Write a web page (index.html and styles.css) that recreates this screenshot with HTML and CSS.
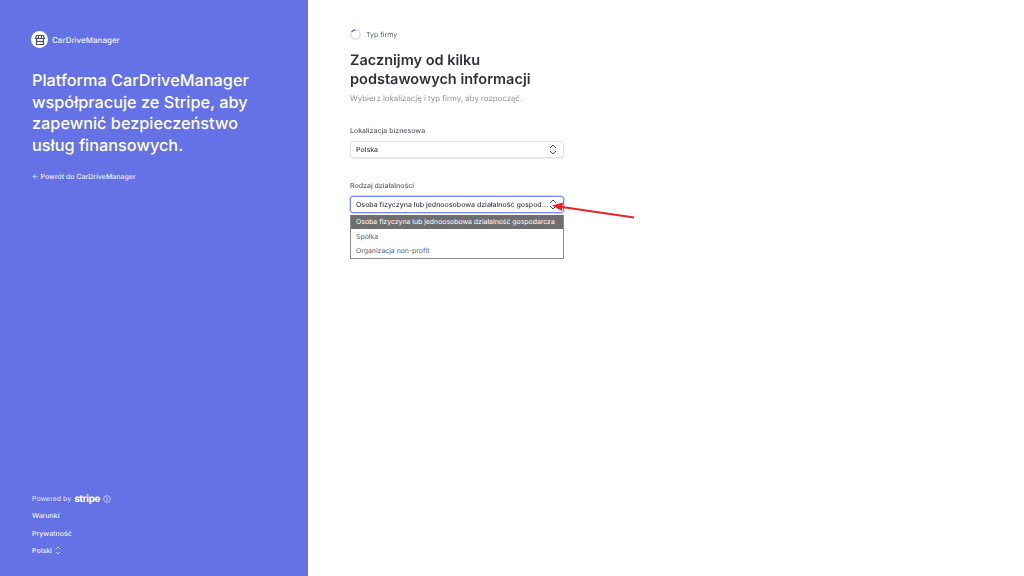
FILE: index.html
```html
<!DOCTYPE html>
<html lang="pl">
<head>
  <meta charset="UTF-8"/>
  <title>CarDriveManager</title>
  <link rel="stylesheet" href="styles.css">
</head>
<body>

<div class="page">
  <div class="side">
    <div class="brand">
      <div class="brand-icon">
        <svg width="12" height="12" viewBox="0 0 12 12" fill="none" stroke="#4a4f63" stroke-width="1.2">
          <path d="M2.5 1.5h7l1 3H1.5z"/>
          <path d="M2.5 5v5.5h7V5"/>
          <path d="M2.5 7.5h7"/>
          <path d="M4.5 1.5v3M7.5 1.5v3"/>
        </svg>
      </div>
      <span>CarDriveManager</span>
    </div>
    <h2 class="side-title">Platforma CarDriveManager współpracuje ze Stripe, aby zapewnić bezpieczeństwo usług finansowych.</h2>
    <div class="back">← Powrót do CarDriveManager</div>

    <div class="side-foot">
      <div class="powered">
        <span>Powered by</span>
        <b class="stripe">stripe</b>
        <svg width="8" height="8" viewBox="0 0 8 8" fill="none" stroke="#d5d9fa" stroke-width="0.8">
          <circle cx="4" cy="4" r="3.4"/>
          <path d="M4 2v4"/>
        </svg>
      </div>
      <div class="foot-link">Warunki</div>
      <div class="foot-link">Prywatność</div>
      <div class="foot-link">Polski
        <svg width="6" height="9" viewBox="0 0 6 9" fill="none" stroke="#e3e6ff" stroke-width="0.8">
          <path d="M1 3l2-2 2 2M1 6l2 2 2-2"/>
        </svg>
      </div>
    </div>
  </div>

  <div class="main">
    <div class="step">
      <svg width="11" height="11" viewBox="0 0 11 11" fill="none" stroke-width="1.3">
        <circle cx="5.5" cy="5.5" r="4.7" stroke="#d6dcf5"/>
        <path d="M1.6 2.9A4.7 4.7 0 0 1 5.5 .8" stroke="#4f6bd8"/>
      </svg>
      <span>Typ firmy</span>
    </div>
    <h1>Zacznijmy od kilku podstawowych informacji</h1>
    <p class="sub">Wybierz lokalizację i typ firmy, aby rozpocząć.</p>

    <div class="field">
      <label>Lokalizacja biznesowa</label>
      <div class="select">
        <span>Polska</span>
        <svg class="chev" width="8" height="11" viewBox="0 0 8 11" fill="none" stroke="#4f5566" stroke-width="1">
          <path d="M1 4l3-3 3 3M1 7l3 3 3-3"/>
        </svg>
      </div>
    </div>

    <div class="field second">
      <label>Rodzaj działalności</label>
      <div class="select focused">
        <span>Osoba fizyczyna lub jednoosobowa działalność gospod...</span>
        <svg class="chev" width="8" height="11" viewBox="0 0 8 11" fill="none" stroke="#4f5566" stroke-width="1">
          <path d="M1 4l3-3 3 3M1 7l3 3 3-3"/>
        </svg>
      </div>
      <div class="next-btn"></div>
      <div class="dropdown">
        <div class="opt active">Osoba fizyczyna lub jednoosobowa działalność gospodarcza</div>
        <div class="opt">Spółka</div>
        <div class="opt">Organizacja non-profit</div>
      </div>
    </div>
  </div>
</div>

<svg class="arrow" width="90" height="22" viewBox="0 0 90 22">
  <path d="M84 15.5L12 5" stroke="#e8232a" stroke-width="2" fill="none"/>
  <path d="M2 3.5L13 0.5L12 9z" fill="#e8232a"/>
</svg>

</body>
</html>
```

FILE: styles.css
```css
* {
  margin: 0; padding: 0; box-sizing: border-box;
}
body {
  font-family: 'Inter', sans-serif;
  background: #fff;
  overflow: hidden;
  text-rendering: geometricPrecision;
}
.page {
  display: flex;
  height: 576px;
  filter: blur(0.3px);
}
.side {
  width: 307.5px;
  background: #6472e6;
  color: #fff;
  padding: 31px 32px 21px 31px;
  display: flex;
  flex-direction: column;
}
.brand {
  display: flex;
  align-items: center;
  gap: 4px;
  font-size: 8px;
  font-weight: 500;
  color: #f0f1ff;
}
.brand-icon {
  width: 17px;
  height: 17px;
  border-radius: 50%;
  background: #fff;
  display: flex;
  align-items: center;
  justify-content: center;
}
.side-title {
  margin: 22px 0 0 1px;
  width: 230px;
  font-size: 16.3px;
  line-height: 21.5px;
  font-weight: 500;
}
.back {
  margin: 16px 0 0 1px;
  font-size: 7px;
  font-weight: 500;
  color: #eceeff;
}
.side-foot {
  margin-top: auto;
  margin-left: 1px;
  display: flex;
  flex-direction: column;
  gap: 8.3px;
}
.powered {
  display: flex;
  align-items: center;
  gap: 3px;
  font-size: 7px;
  color: #dfe2ff;
  height: 9px;
}
.stripe {
  font-size: 10px;
  font-weight: 700;
  letter-spacing: -0.4px;
  color: #fff;
}
.foot-link {
  font-size: 7px;
  font-weight: 500;
  color: #f0f1ff;
  height: 9px;
  display: flex;
  align-items: center;
  gap: 3px;
}
.main {
  flex: 1;
  padding: 29px 0 0 42.5px;
}
.step {
  display: flex;
  align-items: center;
  gap: 5px;
  font-size: 7px;
  color: #5c6376;
}
h1 {
  margin-top: 11px;
  width: 214px;
  font-size: 14.5px;
  line-height: 19px;
  font-weight: 600;
  color: #30313d;
}
.sub {
  margin-top: 4px;
  font-size: 7.85px;
  color: #9094a0;
}
.field {
  width: 214px;
  margin-top: 23px;
  position: relative;
}
label {
  display: block;
  font-size: 7px;
  font-weight: 500;
  color: #585d6c;
  margin-bottom: 6px;
}
.select {
  height: 17px;
  padding: 0 6px 0 5px;
  display: flex;
  align-items: center;
  justify-content: space-between;
  white-space: nowrap;
  background: #fff;
  border: 1px solid #e2e2e8;
  border-radius: 3px;
  box-shadow: 0 1px 1px rgba(0,0,0,0.08);
  font-size: 7px;
  font-weight: 500;
  color: #3c3d48;
}
.select.focused {
  border: 1px solid #7a8bf0;
  box-shadow: 0 0 0 1px #d2d8fb;
}
.next-btn {
  height: 18px;
  margin-top: 22px;
  background: #5a67c9;
  border-radius: 3px;
}
.dropdown {
  position: absolute;
  top: 33.5px;
  left: 0;
  width: 214px;
  background: #fff;
  border: 1px solid #8d8d8d;
  border-top: none;
  font-size: 6.9px;
  color: #5c6272;
  white-space: nowrap;
}
.opt {
  height: 14.5px;
  padding-left: 5px;
  display: flex;
  align-items: center;
}
.opt.active {
  background: #6e6e6e;
  color: #fff;
}
.arrow {
  position: absolute;
  left: 550px;
  top: 202px;
}
```
